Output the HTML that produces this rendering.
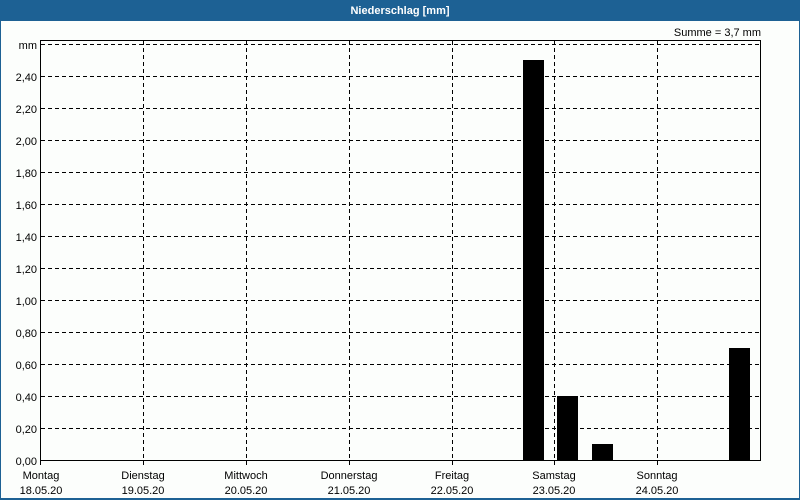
<!DOCTYPE html>
<html><head><style>
html,body{margin:0;padding:0;background:#fff}
svg{display:block}
text{font-family:"Liberation Sans",sans-serif;font-size:11px;fill:#000}
</style></head><body>
<svg width="800" height="500" xmlns="http://www.w3.org/2000/svg">
<rect x="0" y="0" width="800" height="500" fill="#1d6194"/>
<rect x="1" y="21" width="798" height="477" fill="#fcfefc"/>
<text x="400" y="14" text-anchor="middle" style="fill:#fff;font-weight:bold;font-size:11px">Niederschlag [mm]</text>
<text x="761" y="36" text-anchor="end">Summe = 3,7 mm</text>
<g stroke="#000" stroke-width="1" stroke-dasharray="4,3" shape-rendering="crispEdges">
<line x1="41" y1="44.5" x2="760" y2="44.5"/>
<line x1="41" y1="76.5" x2="760" y2="76.5"/>
<line x1="41" y1="108.5" x2="760" y2="108.5"/>
<line x1="41" y1="140.5" x2="760" y2="140.5"/>
<line x1="41" y1="172.5" x2="760" y2="172.5"/>
<line x1="41" y1="204.5" x2="760" y2="204.5"/>
<line x1="41" y1="236.5" x2="760" y2="236.5"/>
<line x1="41" y1="268.5" x2="760" y2="268.5"/>
<line x1="41" y1="300.5" x2="760" y2="300.5"/>
<line x1="41" y1="332.5" x2="760" y2="332.5"/>
<line x1="41" y1="364.5" x2="760" y2="364.5"/>
<line x1="41" y1="396.5" x2="760" y2="396.5"/>
<line x1="41" y1="428.5" x2="760" y2="428.5"/>
<line x1="143.5" y1="41" x2="143.5" y2="467"/>
<line x1="246.5" y1="41" x2="246.5" y2="467"/>
<line x1="349.5" y1="41" x2="349.5" y2="467"/>
<line x1="452.5" y1="41" x2="452.5" y2="467"/>
<line x1="554.5" y1="41" x2="554.5" y2="467"/>
<line x1="657.5" y1="41" x2="657.5" y2="467"/>
</g>
<g fill="#000" shape-rendering="crispEdges">
<rect x="523" y="60" width="21" height="401"/>
<rect x="557" y="396" width="21" height="65"/>
<rect x="592" y="444" width="21" height="17"/>
<rect x="729" y="348" width="21" height="113"/>
</g>
<path d="M40.5 460.5V40.5H760.5V460.5H40.5M40.5 460.5V465" fill="none" stroke="#000" shape-rendering="crispEdges"/>
<g text-anchor="end">
<text x="37" y="49">mm</text>
<text x="37" y="81">2,40</text>
<text x="37" y="113">2,20</text>
<text x="37" y="145">2,00</text>
<text x="37" y="177">1,80</text>
<text x="37" y="209">1,60</text>
<text x="37" y="241">1,40</text>
<text x="37" y="273">1,20</text>
<text x="37" y="305">1,00</text>
<text x="37" y="337">0,80</text>
<text x="37" y="369">0,60</text>
<text x="37" y="401">0,40</text>
<text x="37" y="433">0,20</text>
<text x="37" y="465">0,00</text>
</g>
<g text-anchor="middle">
<text x="41" y="479">Montag</text><text x="41" y="494">18.05.20</text>
<text x="143" y="479">Dienstag</text><text x="143" y="494">19.05.20</text>
<text x="246" y="479">Mittwoch</text><text x="246" y="494">20.05.20</text>
<text x="349" y="479">Donnerstag</text><text x="349" y="494">21.05.20</text>
<text x="452" y="479">Freitag</text><text x="452" y="494">22.05.20</text>
<text x="554" y="479">Samstag</text><text x="554" y="494">23.05.20</text>
<text x="657" y="479">Sonntag</text><text x="657" y="494">24.05.20</text>
</g>
</svg>
</body></html>
